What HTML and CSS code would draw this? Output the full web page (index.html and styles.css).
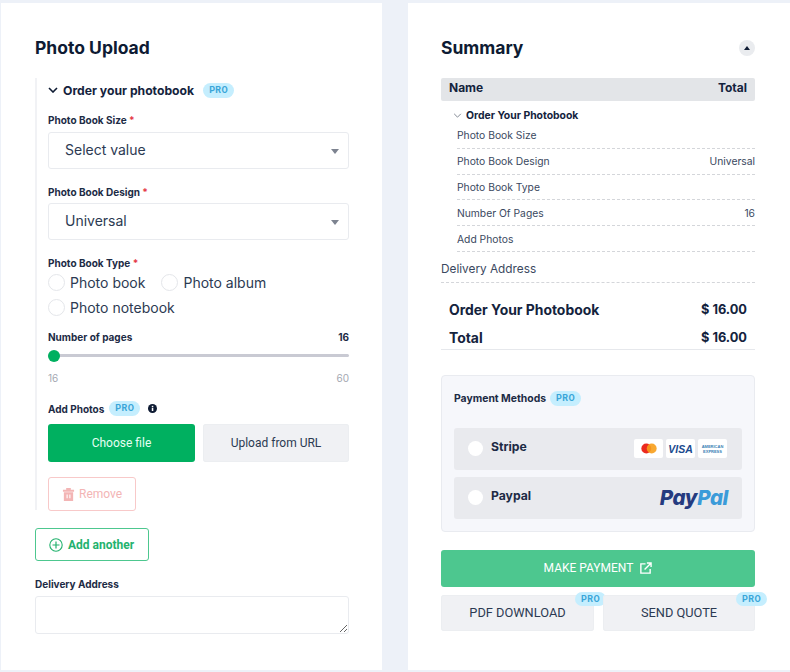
FILE: index.html
```html
<!DOCTYPE html>
<html lang="en">
<head>
<meta charset="utf-8">
<title>Photo Upload</title>
<link rel="stylesheet" href="styles.css">
</head>
<body>
<main class="page">
  <section class="card left">
    <h1 class="title">Photo Upload</h1>
    <div class="group">
      <div class="group-head">
        <svg class="chev" viewBox="0 0 10 6" width="10" height="6"><path d="M1 1l4 4 4-4" fill="none" stroke="#0e1b33" stroke-width="1.6"/></svg>
        <span>Order your photobook</span>
        <span class="pro pro-head">PRO</span>
      </div>
      <div class="label l-size">Photo Book Size <b>*</b></div>
      <div class="select">Select value<i class="caret"></i></div>
      <div class="label l-design">Photo Book Design <b>*</b></div>
      <div class="select">Universal<i class="caret"></i></div>
      <div class="label l-type">Photo Book Type <b>*</b></div>
      <div class="radios">
        <label class="radio"><i></i>Photo book</label>
        <label class="radio"><i></i>Photo album</label>
        <label class="radio"><i></i>Photo notebook</label>
      </div>
      <div class="label split l-pages"><span>Number of pages</span><span>16</span></div>
      <div class="slider"><i class="thumb"></i></div>
      <div class="range"><span>16</span><span>60</span></div>
      <div class="label l-add">Add Photos <span class="pro pro-add">PRO</span>
        <svg class="info" viewBox="0 0 10 10" width="9" height="9"><circle cx="5" cy="5" r="5" fill="#0e1b33"/><rect x="4.2" y="4.2" width="1.7" height="3.6" fill="#fff"/><rect x="4.2" y="2" width="1.7" height="1.5" fill="#fff"/></svg>
      </div>
      <div class="upload">
        <button class="btn green">Choose file</button>
        <button class="btn grey">Upload from URL</button>
      </div>
      <button class="remove">
        <svg viewBox="0 0 14 16" width="13" height="15"><path d="M1 3h12v2H1zM4.500 1h5v2h-5zM2 5.500h10V15H2z" fill="#f3b5b5"/><path d="M5.500 8v4M8.500 8v4" stroke="#fff" stroke-width="1.200"/></svg>
        Remove
      </button>
    </div>
    <button class="add">
      <svg viewBox="0 0 14 14" width="14" height="14"><circle cx="7" cy="7" r="6.200" fill="none" stroke="#23b26e" stroke-width="1.100"/><path d="M7 3.500v7M3.500 7h7" stroke="#23b26e" stroke-width="1.200"/></svg>
      Add another
    </button>
    <div class="label l-delivery">Delivery Address</div>
    <textarea class="address"></textarea>
  </section>

  <section class="card right">
    <div class="sum-head">
      <h1 class="title">Summary</h1>
      <span class="toggle"><i></i></span>
    </div>
    <div class="thead"><span>Name</span><span>Total</span></div>
    <div class="sub">
      <svg viewBox="0 0 10 6" width="9" height="5"><path d="M1 1l4 4 4-4" fill="none" stroke="#6b7280" stroke-width="1"/></svg>
      Order Your Photobook
    </div>
    <ul class="rows">
      <li><span>Photo Book Size</span></li>
      <li><span>Photo Book Design</span><span>Universal</span></li>
      <li><span>Photo Book Type</span></li>
      <li><span>Number Of Pages</span><span>16</span></li>
      <li><span>Add Photos</span></li>
    </ul>
    <div class="deliv">Delivery Address</div>
    <div class="tot first"><span class="tname">Order Your Photobook</span><span>$ 16.00</span></div>
    <div class="tot last"><span class="tname">Total</span><span>$ 16.00</span></div>
    <div class="pay">
      <div class="pay-title">Payment Methods <span class="pro pro-pay">PRO</span></div>
      <div class="method">
        <i class="dot"></i><span class="mname">Stripe</span>
        <div class="cards">
          <span class="cc"><svg viewBox="0 0 20 12" width="18" height="11"><circle cx="7" cy="6" r="5.500" fill="#eb2a1f"/><circle cx="13" cy="6" r="5.500" fill="#f79e1b" opacity=".9"/></svg></span>
          <span class="cc visa">VISA</span>
          <span class="cc amex">AMERICAN<br>EXPRESS</span>
        </div>
      </div>
      <div class="method">
        <i class="dot"></i><span class="mname">Paypal</span>
        <span class="paypal">Pay<em>Pal</em></span>
      </div>
    </div>
    <button class="make">MAKE PAYMENT
      <svg viewBox="0 0 14 14" width="13" height="13"><path d="M7 2H2v10h10V7.500" fill="none" stroke="#fff" stroke-width="1.500"/><path d="M6 8l6.500-6.500M8.500 1h4.500v4.500" fill="none" stroke="#fff" stroke-width="1.500"/></svg>
    </button>
    <div class="actions">
      <button class="btn grey act">PDF DOWNLOAD<span class="pro pro-act">PRO</span></button>
      <button class="btn grey act">SEND QUOTE<span class="pro pro-act">PRO</span></button>
    </div>
  </section>
</main>
</body>
</html>
```

FILE: styles.css
```css
* { box-sizing: border-box; }
html, body { margin: 0; height: 100%; }
body {
  background: #edf1f8;
  font-family: "Inter", "Noto Sans", sans-serif;
  color: #1d2b45;
  overflow: hidden;
}
button { font-family: inherit; cursor: pointer; }
i { display: block; }

.page {
  display: flex;
  gap: 26px;
  padding: 3px 0 2px 1px;
  height: 672px;
}
.card { background: #fff; height: 667px; flex: none; }
.left { width: 381px; padding: 34px 33px 0 34px; }
.right { width: 382px; padding: 34px 35px 0 33px; }

.title {
  margin: 0;
  font-size: 17.500px;
  line-height: 22px;
  font-weight: 700;
  color: #0e1b33;
}

.pro {
  display: inline-block;
  background: #c5eefe;
  color: #3aa5d8;
  font-family: "Roboto", sans-serif;
  font-weight: 700;
  font-size: 9px;
  letter-spacing: .4px;
  line-height: 15px;
  height: 15px;
  padding: 0 6px;
  border-radius: 8px;
}

.group {
  margin-top: 19px;
  border-left: 2px solid #f1f2f5;
  padding-left: 11px;
  height: 432px;
}
.group-head {
  display: flex;
  align-items: center;
  height: 24px;
  font-size: 12.200px;
  font-weight: 700;
  color: #14233d;
}
.chev { margin-right: 5px; }
.pro-head { margin-left: 9px; }

.label {
  font-size: 10px;
  line-height: 14px;
  font-weight: 700;
  color: #1d2b45;
}
.label b { color: #e53946; font-weight: 700; }
.split { display: flex; justify-content: space-between; }
.l-size { margin-top: 11px; margin-bottom: 5px; }
.l-design { margin-top: 16px; margin-bottom: 4px; }
.l-type { margin-top: 16px; }
.l-pages { margin-top: 10px; }
.l-add { margin-top: 16px; display: flex; align-items: center; margin-bottom: 8px; }
.l-delivery { margin-top: 16px; margin-bottom: 5px; }
.pro-add { margin-left: 5px; }
.info { margin-left: 8px; }

.select {
  position: relative;
  height: 37px;
  border: 1px solid #e9ebef;
  border-radius: 3px;
  padding-left: 16px;
  font-size: 14px;
  line-height: 34px;
  color: #2c3a52;
}
.caret {
  position: absolute;
  right: 9px;
  top: 16px;
  border-left: 4px solid transparent;
  border-right: 4px solid transparent;
  border-top: 5px solid #7d8390;
}

.radios {
  display: flex;
  flex-wrap: wrap;
  width: 250px;
  column-gap: 16px;
}
.radio {
  display: flex;
  align-items: center;
  height: 25px;
  font-size: 14px;
  color: #2c3a52;
}
.radio i {
  width: 17px;
  height: 17px;
  border: 1px solid #e4e6ea;
  border-radius: 50%;
  margin-right: 5px;
}

.slider {
  position: relative;
  margin-top: 10px;
  height: 3px;
  background: #c9cad3;
  border-radius: 2px;
}
.thumb {
  position: absolute;
  left: 0;
  top: -4px;
  width: 12px;
  height: 12px;
  border-radius: 50%;
  background: #00b060;
}
.range {
  display: flex;
  justify-content: space-between;
  margin-top: 14px;
  font-size: 10px;
  line-height: 14px;
  color: #a4a8b2;
}

.upload { display: grid; grid-template-columns: 147px 146px; gap: 8px; }
.btn {
  border: 0;
  border-radius: 3px;
  height: 38px;
  font-family: "Roboto", sans-serif;
  font-size: 12px;
}
.green { background: #00b060; color: #e6fff3; }
.grey { background: #f0f1f4; color: #2c3a52; box-shadow: 0 0 0 1px #eceef1 inset; }

.remove {
  display: flex;
  align-items: center;
  gap: 4px;
  margin-top: 15px;
  width: 88px;
  height: 34px;
  padding: 0 0 0 13px;
  background: #fff;
  border: 1px solid #f8c9c9;
  border-radius: 3px;
  color: #f3b5b5;
  font-family: "Roboto", sans-serif;
  font-size: 12px;
}

.add {
  display: flex;
  align-items: center;
  gap: 5px;
  margin-top: 18px;
  width: 114px;
  height: 33px;
  padding: 0 0 0 13px;
  background: #fff;
  border: 1px solid #4dc78f;
  border-radius: 3px;
  color: #23b26e;
  font-family: "Roboto", sans-serif;
  font-weight: 700;
  font-size: 12px;
}

.address {
  display: block;
  width: 314px;
  height: 38px;
  border: 1px solid #e9ebef;
  border-radius: 3px;
  outline: 0;
  background: #fff;
}

.sum-head { display: flex; justify-content: space-between; align-items: center; }
.toggle {
  display: flex;
  align-items: center;
  justify-content: center;
  width: 16px;
  height: 16px;
  border-radius: 50%;
  background: #eaecef;
}
.toggle i {
  border-left: 3px solid transparent;
  border-right: 3px solid transparent;
  border-bottom: 4px solid #0e1b33;
}

.thead {
  display: flex;
  justify-content: space-between;
  margin-top: 19px;
  height: 23px;
  padding: 0 8px;
  background: #e3e5e8;
  border-radius: 2px;
  font-size: 12px;
  line-height: 20px;
  font-weight: 700;
  color: #14233d;
}
.sub {
  display: flex;
  align-items: center;
  gap: 4px;
  margin-top: 6px;
  padding-left: 12px;
  height: 16px;
  font-size: 10.400px;
  font-weight: 700;
  color: #14233d;
}
.rows { list-style: none; margin: 0 0 0 16px; padding: 0; }
.rows li {
  display: flex;
  justify-content: space-between;
  align-items: center;
  height: 25.800px;
  border-bottom: 1px dashed #d4d6da;
  font-size: 10.300px;
  color: #3a4860;
}
.deliv {
  height: 31px;
  line-height: 34px;
  font-size: 11.800px;
  color: #3a4860;
  border-bottom: 1px dashed #d4d6da;
}
.tot {
  display: flex;
  justify-content: space-between;
  padding: 0 8px;
  font-size: 12.800px;
  font-weight: 700;
  color: #14233d;
}
.tname { font-size: 13.900px; }
.first { margin-top: 16px; height: 22px; line-height: 22px; }
.last {
  margin-top: 6px;
  height: 23px;
  line-height: 22px;
  border-bottom: 1px solid #e6e8ec;
}

.pay {
  margin-top: 25px;
  height: 157px;
  padding: 14px 12px 0;
  background: #f6f7fb;
  border: 1px solid #e9ebf0;
  border-radius: 4px;
}
.pay-title {
  display: flex;
  align-items: center;
  height: 17px;
  margin-bottom: 21px;
  font-size: 10.400px;
  font-weight: 700;
  color: #1d2b45;
}
.pro-pay { margin-left: 4px; }
.method {
  display: flex;
  align-items: center;
  height: 42px;
  margin-bottom: 7px;
  padding: 0 15px 0 14px;
  background: #e9eaee;
  border-radius: 3px;
}
.dot { width: 15px; height: 15px; border-radius: 50%; background: #fff; margin-right: 8px; }
.mname { font-size: 12.200px; font-weight: 700; color: #1d2b45; position: relative; top: -2px; }
.cards { margin-left: auto; display: flex; gap: 3px; }
.cc {
  display: flex;
  align-items: center;
  justify-content: center;
  width: 29px;
  height: 19px;
  background: #fff;
  border-radius: 2px;
}
.visa {
  font-family: "Liberation Sans", sans-serif;
  font-style: italic;
  font-weight: 700;
  font-size: 10.500px;
  color: #1a4a8e;
}
.amex {
  text-align: center;
  font-family: "Liberation Sans", sans-serif;
  font-size: 4px;
  line-height: 5px;
  color: #3a7fb5;
  font-weight: 700;
}
.paypal {
  margin-left: auto;
  margin-right: -1px;
  font-family: "Inter", sans-serif;
  font-style: italic;
  font-weight: 800;
  font-size: 20.500px;
  letter-spacing: -.4px;
  color: #253b80;
}
.paypal em { color: #3b9bd9; }

.make {
  display: flex;
  align-items: center;
  justify-content: center;
  gap: 6px;
  width: 100%;
  height: 37px;
  margin-top: 18px;
  border: 0;
  border-radius: 3px;
  background: #4dc78f;
  color: #fff;
  font-family: "Roboto", sans-serif;
  font-size: 12px;
}
.actions { display: grid; grid-template-columns: 153px 152px; gap: 9px; margin-top: 8px; }
.act { position: relative; height: 36px; font-size: 12.800px; }
.pro-act { position: absolute; right: -12px; top: -3px; height: 14px; line-height: 14px; border-radius: 7px; padding: 0 6px; }
```
